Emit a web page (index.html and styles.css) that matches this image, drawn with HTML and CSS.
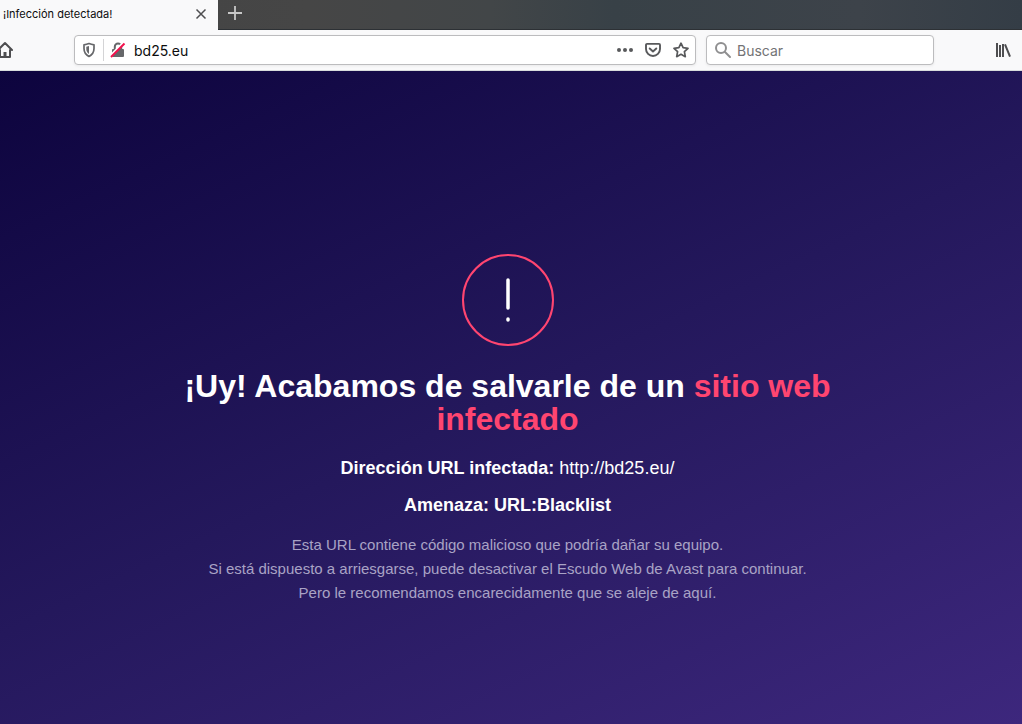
FILE: index.html
```html
<!DOCTYPE html>
<html lang="es">
<head>
<meta charset="utf-8">
<title>¡Infección detectada!</title>
<link rel="stylesheet" href="styles.css">
</head>
<body>
<header class="browser">
  <div class="tabs">
    <div class="tab">
      <span class="tab-title">¡Infección detectada!</span>
      <button class="icon-button" aria-label="Cerrar pestaña">
        <svg width="12" height="12" viewBox="0 0 12 12" fill="none" stroke="#4e4e50" stroke-width="1.5"><path d="M1.500 1.500l9 9M10.500 1.500l-9 9"/></svg>
      </button>
    </div>
    <button class="icon-button new-tab" aria-label="Nueva pestaña">
      <svg width="16" height="16" viewBox="0 0 16 16" fill="none" stroke="#c8c8c8" stroke-width="1.8"><path d="M8 1v14M1 8h14"/></svg>
    </button>
  </div>
  <nav class="toolbar">
    <button class="icon-button home" aria-label="Inicio">
      <svg width="16" height="18" viewBox="0 0 16 18" fill="none" stroke="#4e4e50" stroke-width="2" stroke-linejoin="round" stroke-linecap="round"><path d="M1 9l7-7 7 7M3 9v7h10V9"/><path d="M8 16v-5" stroke-width="3" stroke-linecap="butt"/></svg>
    </button>
    <div class="field address">
      <button class="icon-button shield" aria-label="Protección">
        <svg width="14" height="16" viewBox="0 0 14 16"><path d="M7 1.500c2 .8 3.500 1.100 5 1.300v3.700c0 3.500-1.700 6.200-5 8-3.300-1.800-5-4.500-5-8V2.800c1.500-.2 3-.5 5-1.300z" fill="none" stroke="#66676a" stroke-width="1.700" stroke-linejoin="round"/><path d="M7 4v8C5.200 10.700 4.300 9 4.300 7V4.700z" fill="#66676a"/></svg>
      </button>
      <button class="icon-button lock" aria-label="Conexión no segura">
        <svg width="16" height="16" viewBox="0 0 16 16"><rect x="2" y="7" width="12" height="8" rx="1" fill="#66676a"/><path d="M4.800 8V4.800a3.200 3.200 0 0 1 6.400 0V8" fill="none" stroke="#66676a" stroke-width="2"/><path d="M1 13.500L13.500 1" stroke="#fff" stroke-width="3"/><path d="M1 15L14.500 1.500" stroke="#f2114c" stroke-width="1.900"/></svg>
      </button>
      <input class="text-input" type="text" value="bd25.eu" aria-label="Dirección">
      <button class="icon-button" aria-label="Acciones de página">
        <svg width="16" height="16" viewBox="0 0 16 16" fill="#58595b"><circle cx="2" cy="8" r="2"/><circle cx="8" cy="8" r="2"/><circle cx="14" cy="8" r="2"/></svg>
      </button>
      <button class="icon-button" aria-label="Guardar en Pocket">
        <svg width="16" height="16" viewBox="0 0 16 16" fill="none" stroke="#58595b" stroke-width="1.900" stroke-linecap="round" stroke-linejoin="round"><path d="M2 1.900h12a1 1 0 0 1 1 1V7a7 7 0 0 1-14 0V2.900a1 1 0 0 1 1-1z"/><path d="M4.700 6.500L8 9.500l3.300-3"/></svg>
      </button>
      <button class="icon-button" aria-label="Añadir a marcadores">
        <svg width="16" height="16" viewBox="0 0 16 16" fill="none" stroke="#58595b" stroke-width="1.700" stroke-linejoin="round"><path d="M8 1.200l2.100 4.500 4.900.6-3.600 3.400.9 5L8 12.300l-4.300 2.400.9-5L1 6.300l4.900-.6z"/></svg>
      </button>
    </div>
    <div class="field search">
      <svg width="18" height="18" viewBox="0 0 18 18" fill="none" stroke="#8f8f90" stroke-width="2" stroke-linecap="round"><circle cx="7" cy="7" r="5"/><path d="M11 11l5 5"/></svg>
      <input class="text-input" type="text" placeholder="Buscar" aria-label="Buscar">
    </div>
    <button class="icon-button library" aria-label="Biblioteca">
      <svg width="16" height="16" viewBox="0 0 16 16" fill="none" stroke="#4e4e50" stroke-width="2"><path d="M2 1v14M5 3v12M8 2v13M10 2.300L15 14.700"/></svg>
    </button>
  </nav>
</header>
<main class="warning">
  <svg class="alert" width="92" height="92" viewBox="0 0 92 92" fill="none" stroke-linecap="round"><circle cx="46" cy="46" r="45" stroke="#ff4570" stroke-width="2"/><path d="M46 26v28M46 65v1" stroke="#fff" stroke-width="3.500"/></svg>
  <h1 class="headline">¡Uy! Acabamos de salvarle de un <span class="accent">sitio web infectado</span></h1>
  <p class="detail"><strong>Dirección URL infectada:</strong> http://bd25.eu/</p>
  <p class="detail"><strong>Amenaza: URL:Blacklist</strong></p>
  <p class="advice">Esta URL contiene código malicioso que podría dañar su equipo.<br>Si está dispuesto a arriesgarse, puede desactivar el Escudo Web de Avast para continuar.<br>Pero le recomendamos encarecidamente que se aleje de aquí.</p>
</main>
</body>
</html>
```
FILE: styles.css
```css
* { box-sizing: border-box; }
body {
  margin: 0;
  min-height: 100vh;
  display: flex;
  flex-direction: column;
  font-family: "Liberation Sans", Arial, sans-serif;
}
svg { display: block; flex: none; }
.icon-button {
  flex: none;
  padding: 0;
  border: 0;
  background: none;
}
.browser { font-family: Inter, "Liberation Sans", sans-serif; }
.tabs {
  display: flex;
  height: 30px;
  background: linear-gradient(90deg, #434343 0, #464646 30%, #424648 48%, #384147 60%, #3d434a 84%, #343d46 100%);
  box-shadow: inset 0 -1px #2d3135;
}
.tab {
  display: flex;
  align-items: center;
  justify-content: space-between;
  width: 218px;
  padding: 0 11px 2px 3px;
  background: #f9f9fa;
}
.tab-title { font-size: 11px; color: #0c0c0d; }
.new-tab { padding: 0 9px 4px; }
.toolbar {
  display: flex;
  align-items: center;
  height: 41px;
  padding-right: 11px;
  background: #f9f9fa;
  border-bottom: 1px solid #d8dcdc;
}
.home { margin: 0 61px 0 -3px; }
.field {
  display: flex;
  align-items: center;
  height: 30px;
  background: #fff;
  border: 1px solid #bcbcbe;
  border-radius: 4px;
  box-shadow: 0 1px 3px #00000010;
}
.address { flex: 1; gap: 12px; padding: 0 6px 0 7px; }
.shield { padding-right: 7px; border-right: 1px solid #d4d4d6; height: 22px; }
.lock { margin-left: -6px; }
.text-input {
  flex: 1;
  min-width: 0;
  padding: 0;
  border: 0;
  outline: 0;
  background: none;
  font: 14px Inter, "Liberation Sans", sans-serif;
  color: #0c0c0d;
}
.address .text-input { margin-left: -4px; }
.text-input::placeholder { color: #737375; opacity: 1; }
.search { width: 228px; margin: 0 61px 0 10px; padding-left: 7px; gap: 5px; }
.warning {
  flex: 1;
  display: flex;
  flex-direction: column;
  align-items: center;
  padding: 183px 7px 24px 0;
  background: linear-gradient(155deg, #0d043e 0%, #24185c 50%, #3d277d 100%);
  color: #fff;
  text-align: center;
}
.headline {
  max-width: 680px;
  margin: 24px 0 20px;
  font-size: 32px;
  line-height: 33px;
}
.accent { color: #ff4570; }
.detail { margin: 0 0 13px; font-size: 18px; line-height: 24px; }
.advice {
  margin: 3px 0 0;
  font-size: 15px;
  line-height: 24px;
  color: #a9a3c5;
}
```
